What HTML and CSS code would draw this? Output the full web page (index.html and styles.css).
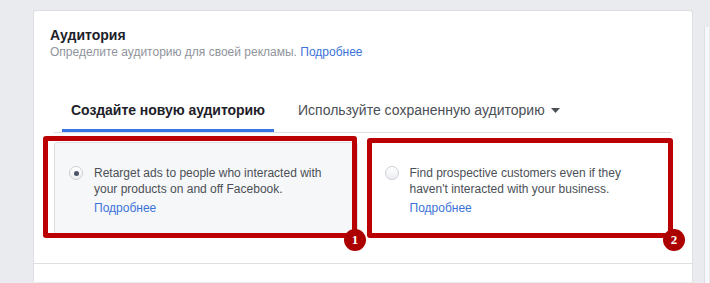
FILE: index.html
```html
<!DOCTYPE html>
<html lang="ru">

<head>
  <meta charset="UTF-8" />
  <meta name="viewport" content="width=device-width, initial-scale=1" />
  <title>Аудитория</title>
  <link rel="stylesheet" href="styles.css">
</head>

<body>
  <div class="page">
    <section class="audience-card">
      <div class="card-header">
        <p class="title">Аудитория</p>
        <p class="subtitle">Определите аудиторию для своей рекламы. <a class="link" href="#">Подробнее</a></p>
      </div>

      <div class="tabs">
        <div class="tab tab-active">Создайте новую аудиторию</div>
        <div class="tab">
          Используйте сохраненную аудиторию
          <svg class="caret" width="9" height="5" viewBox="0 0 9 5">
            <path d="M0 0 H9 L4.5 5 Z" fill="#4b4f56" />
          </svg>
        </div>
      </div>

      <div class="options">
        <div class="option option-selected">
          <span class="radio radio-checked"></span>
          <div class="option-body">
            <p class="option-text">Retarget ads to people who interacted with your products on and off Facebook.</p>
            <a class="link" href="#">Подробнее</a>
          </div>
        </div>

        <div class="option">
          <span class="radio"></span>
          <div class="option-body">
            <p class="option-text">Find prospective customers even if they haven't interacted with your business.</p>
            <a class="link" href="#">Подробнее</a>
          </div>
        </div>
      </div>

      <div class="card-footer"></div>

      <!-- annotation marks drawn over the screenshot -->
      <div class="mark mark-one"></div>
      <div class="mark mark-two"></div>
      <span class="badge badge-one">1</span>
      <span class="badge badge-two">2</span>
    </section>

    <aside class="side-panel"></aside>
  </div>
</body>

</html>
```

FILE: styles.css
```css
* {
  box-sizing: border-box;
}

body {
  margin: 0;
  font-family: "Liberation Sans", Arial, Helvetica, sans-serif;
  background: #e9ebee;
  color: #1d2129;
  height: 283px;
  overflow: hidden;
}

p {
  margin: 0;
}

.page {
  display: flex;
  align-items: flex-start;
  gap: 11px;
  padding: 10px 0 0 33px;
}

.audience-card {
  position: relative;
  width: 660px;
  flex-shrink: 0;
  background: #ffffff;
  border: 1px solid #dddfe2;
  border-bottom: none;
  border-radius: 3px 3px 0 0;
}

.card-header {
  padding: 15px 16px 0;
}

.title {
  font-size: 14px;
  line-height: 18px;
  font-weight: bold;
  color: #1d2129;
}

.subtitle {
  font-size: 12px;
  line-height: 16px;
  color: #90949c;
}

.link {
  color: #3b73d8;
  text-decoration: none;
}

.tabs {
  display: flex;
  gap: 15px;
  margin: 41px 21px 0 20px;
  padding-left: 8px;
  border-bottom: 1px solid #dddfe2;
}

.tab {
  display: flex;
  align-items: center;
  gap: 6px;
  padding: 0 9px 10px;
  font-size: 14px;
  line-height: 18px;
  color: #4b4f56;
  border-bottom: 3px solid transparent;
}

.tab-active {
  font-weight: bold;
  color: #1d2129;
  letter-spacing: -0.05px;
  border-bottom-color: #3578e5;
}

.caret {
  margin-top: 1px;
}

.options {
  display: grid;
  grid-template-columns: 1fr 1fr;
  gap: 12px;
  margin: 9px 19px 25px 20px;
}

.option {
  display: flex;
  gap: 11px;
  height: 96px;
  padding: 22px 14px 0;
  background: #ffffff;
  border: 1px solid #dddfe2;
  border-radius: 3px;
}

.option-selected {
  background: #f6f7f9;
}

.radio {
  flex-shrink: 0;
  width: 14px;
  height: 14px;
  margin-top: 1px;
  border-radius: 50%;
  border: 1px solid #ccd0d5;
  background: linear-gradient(#ffffff, #eceef1);
  display: flex;
  align-items: center;
  justify-content: center;
}

.radio-checked::after {
  content: "";
  width: 5px;
  height: 5px;
  border-radius: 50%;
  background: #4b5468;
}

.option-body {
  font-size: 12px;
  line-height: 16px;
}

.option-text {
  color: #4b4f56;
  margin-bottom: 3px;
}

.card-footer {
  height: 19px;
  border-top: 1px solid #dddfe2;
}

.mark {
  position: absolute;
  border: 5px solid #ba0000;
  border-radius: 3px;
}

.mark-one {
  left: 9px;
  top: 125px;
  width: 314px;
  height: 102px;
}

.mark-two {
  left: 333px;
  top: 127px;
  width: 306px;
  height: 100px;
}

.badge {
  position: absolute;
  top: 218px;
  width: 22px;
  height: 22px;
  border-radius: 50%;
  background: #ac0000;
  color: #ffffff;
  font-family: "Liberation Serif", "Times New Roman", serif;
  font-weight: bold;
  font-size: 13px;
  line-height: 22px;
  text-align: center;
}

.badge-one {
  left: 310px;
}

.badge-two {
  left: 629px;
}

.side-panel {
  width: 5px;
  height: 256px;
  margin-top: 17px;
  background: #f7f8fa;
  border-left: 1px solid #dddfe2;
}
```
